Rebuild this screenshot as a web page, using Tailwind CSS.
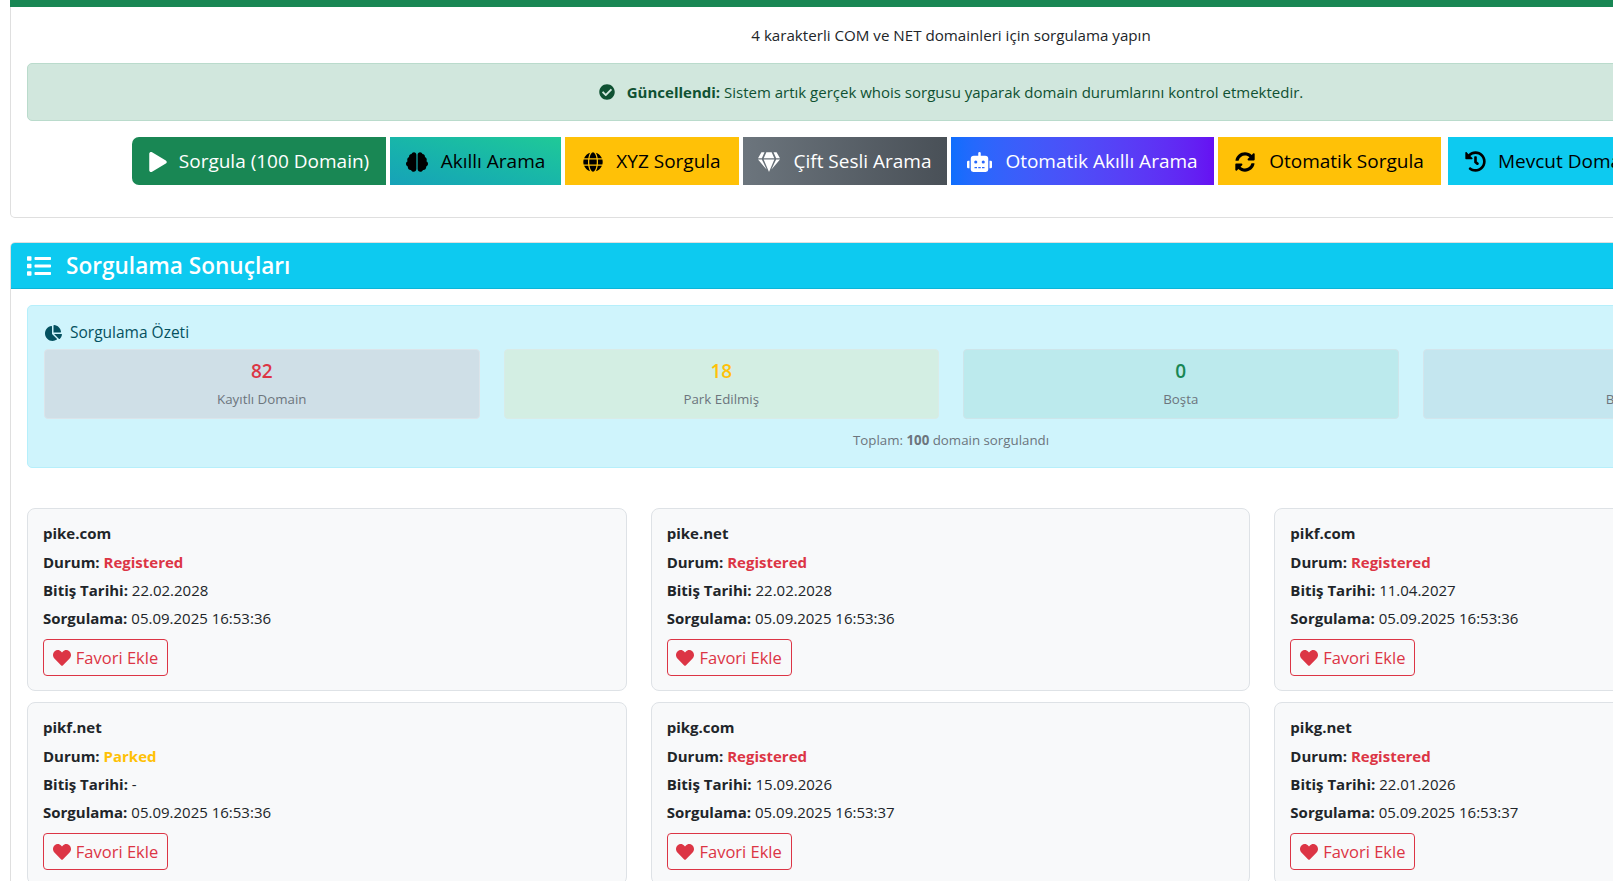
<!DOCTYPE html>
<html lang="tr">
<head>
    <meta charset="UTF-8">
    <title>Domain Sorgulama</title>
    <script src="https://cdn.jsdelivr.net/npm/@tailwindcss/browser@4"></script>
</head>
<body class="bg-white overflow-hidden h-[881px] font-['Open_Sans',sans-serif] text-[#212529]">
<div class="w-[1902px] px-[10px]">

    <!-- Search card -->
    <section class="h-[218px] border border-t-0 border-[#dfdfdf] rounded-b-[5px]">
        <div class="h-[7px] bg-[#198754] -mx-px"></div>
        <div class="px-4">
            <p class="h-[56px] flex items-center justify-center text-[15.15px]">4 karakterli COM ve NET domainleri için sorgulama yapın</p>
            <div class="h-[58px] flex items-center justify-center gap-2 rounded-[5px] border border-[#badbcc] bg-[#d1e7dd] text-[#0f5132] text-[15px]">
                <svg class="w-4 h-4 mr-1 fill-current" viewBox="0 0 512 512"><path d="M504 256c0 136.967-111.033 248-248 248S8 392.967 8 256 119.033 8 256 8s248 111.033 248 248zM227.314 387.314l184-184c6.248-6.248 6.248-16.379 0-22.627l-22.627-22.627c-6.248-6.249-16.379-6.249-22.628 0L216 308.118l-70.059-70.059c-6.248-6.248-16.379-6.248-22.628 0l-22.627 22.627c-6.248 6.248-6.248 16.379 0 22.627l104 104c6.249 6.249 16.379 6.249 22.628.001z"/></svg>
                <span><b class="font-bold">Güncellendi:</b> Sistem artık gerçek whois sorgusu yaparak domain durumlarını kontrol etmektedir.</span>
            </div>
            <!-- Buttons -->
            <div class="mt-4 flex justify-center gap-[4px] text-[19px]">
                <button class="h-12 pt-px w-[254px] flex items-center justify-center gap-3 rounded-l-[7px] bg-[#198754] text-white whitespace-nowrap">
                    <svg class="w-[18px] h-[20px] fill-current" viewBox="0 0 448 512"><path d="M424.4 214.7L72.4 6.6C43.8-10.3 0 6.1 0 47.9V464c0 37.5 40.7 60.1 72.4 41.3l352-208c31.4-18.5 31.5-64.1 0-82.6z"/></svg>
                    Sorgula (100 Domain)
                </button>
                <button class="h-12 pt-px w-[171px] flex items-center justify-center gap-[13px] bg-linear-to-tr from-[#17a2b8] to-[#20c997] text-black whitespace-nowrap">
                    <svg class="w-[22px] h-[20px] fill-current" viewBox="0 0 576 512"><path d="M208 0c-29.9 0-54.7 20.5-61.8 48.2-.8 0-1.4-.2-2.2-.2-35.3 0-64 28.7-64 64 0 4.8.6 9.5 1.7 14C52.5 138 32 166.6 32 200c0 12.6 3.2 24.3 8.3 34.9C16.3 248.7 0 274.3 0 304c0 33.3 20.4 61.9 49.4 73.9-.9 4.6-1.4 9.3-1.4 14.1 0 39.8 32.2 72 72 72 4.1 0 8.1-.5 12-1.2 9.6 28.5 36.2 49.2 68 49.2 39.8 0 72-32.2 72-72V64c0-35.3-28.7-64-64-64zm368 304c0-29.7-16.3-55.3-40.3-69.1 5.2-10.6 8.3-22.3 8.3-34.9 0-33.4-20.5-62-49.7-74 1-4.5 1.7-9.2 1.7-14 0-35.3-28.7-64-64-64-.8 0-1.5.2-2.2.2C422.7 20.5 397.9 0 368 0c-35.3 0-64 28.6-64 64v376c0 39.8 32.2 72 72 72 31.8 0 58.4-20.7 68-49.2 3.9.7 7.9 1.2 12 1.2 39.8 0 72-32.2 72-72 0-4.8-.5-9.5-1.4-14.1 29-12 49.4-40.6 49.4-73.9z"/></svg>
                    Akıllı Arama
                </button>
                <button class="h-12 pt-px w-[174px] flex items-center justify-center gap-[13px] bg-[#ffc107] text-black whitespace-nowrap">
                    <svg class="w-[20px] h-[20px] fill-current" viewBox="0 0 496 512"><path d="M336.5 160C322 70.7 287.8 8 248 8s-74 62.7-88.5 152h177zM152 256c0 22.2 1.2 43.5 3.3 64h185.3c2.1-20.5 3.3-41.8 3.3-64s-1.2-43.5-3.3-64H155.3c-2.1 20.5-3.3 41.8-3.3 64zm324.7-96c-28.6-67.9-86.5-120.4-158-141.6 24.4 33.8 41.2 84.7 50 141.6h108zM177.2 18.4C105.8 39.6 47.8 92.1 19.3 160h108c8.7-56.9 25.5-107.8 49.9-141.6zM487.4 192H372.7c2.1 21 3.3 42.5 3.3 64s-1.2 43-3.3 64h114.6c5.5-20.5 8.6-41.8 8.6-64s-3.1-43.5-8.5-64zM120 256c0-21.5 1.2-43 3.3-64H8.6C3.2 212.5 0 233.8 0 256s3.2 43.5 8.6 64h114.6c-2-21-3.2-42.5-3.2-64zm39.5 96c14.5 89.3 48.7 152 88.5 152s74-62.7 88.5-152h-177zm159.3 141.6c71.4-21.2 129.4-73.7 158-141.6h-108c-8.8 56.9-25.6 107.8-50 141.6zM19.3 352c28.6 67.9 86.5 120.4 158 141.6-24.4-33.8-41.2-84.7-50-141.6h-108z"/></svg>
                    XYZ Sorgula
                </button>
                <button class="h-12 pt-px w-[204px] flex items-center justify-center gap-[13px] bg-linear-to-r from-[#6c757d] to-[#495057] text-white whitespace-nowrap">
                    <svg class="w-[22px] h-[20px] fill-current" viewBox="0 0 576 512"><path d="M485.5 0L576 160H474.9L405.7 0h79.8zm-128 0l69.2 160H149.3L218.5 0h139zm-267 0h79.8l-69.2 160H0L90.5 0zM0 192h100.7l123 251.7c1.5 3.1-2.7 5.9-5 3.3L0 192zm148.2 0h279.6l-137 318.2c-1 2.4-4.5 2.4-5.5 0L148.2 192zm204.1 251.7l123-251.7H576L357.3 446.9c-2.3 2.7-6.5-.1-5-3.2z"/></svg>
                    Çift Sesli Arama
                </button>
                <button class="h-12 pt-px w-[263px] flex items-center justify-center gap-[13px] bg-linear-to-r from-[#0d6efd] to-[#6610f2] text-white whitespace-nowrap">
                    <svg class="w-[25px] h-[20px] fill-current" viewBox="0 0 640 512"><path d="M32,224H64V416H32A31.96166,31.96166,0,0,1,0,384V256A31.96166,31.96166,0,0,1,32,224Zm512-48V448a64.06328,64.06328,0,0,1-64,64H160a64.06328,64.06328,0,0,1-64-64V176a79.974,79.974,0,0,1,80-80H288V32a32,32,0,0,1,64,0V96H464A79.974,79.974,0,0,1,544,176ZM264,256a40,40,0,1,0-40,40A39.997,39.997,0,0,0,264,256Zm-8,128H192v32h64Zm96,0H288v32h64ZM456,256a40,40,0,1,0-40,40A39.997,39.997,0,0,0,456,256Zm-8,128H384v32h64ZM640,256V384a31.96166,31.96166,0,0,1-32,32H576V224h32A31.96166,31.96166,0,0,1,640,256Z"/></svg>
                    Otomatik Akıllı Arama
                </button>
                <button class="h-12 pt-px w-[223px] flex items-center justify-center gap-[14px] bg-[#ffc107] text-black whitespace-nowrap">
                    <svg class="w-[20px] h-[20px] fill-current" viewBox="0 0 512 512"><path d="M370.72 133.28C339.458 104.008 298.888 87.962 255.848 88c-77.458.068-144.328 53.178-162.791 126.85-1.344 5.363-6.122 9.15-11.651 9.15H24.103c-7.498 0-13.194-6.807-11.807-14.176C33.933 94.924 134.813 8 256 8c66.448 0 126.791 26.136 171.315 68.685L463.03 40.97C478.149 25.851 504 36.559 504 57.941V192c0 13.255-10.745 24-24 24H345.941c-21.382 0-32.09-25.851-16.971-40.971l41.75-41.749zM32 296h134.059c21.382 0 32.09 25.851 16.971 40.971l-41.75 41.75c31.262 29.273 71.835 45.319 114.876 45.28 77.418-.07 144.315-53.144 162.787-126.849 1.344-5.363 6.122-9.15 11.651-9.15h57.304c7.498 0 13.194 6.807 11.807 14.176C478.067 417.076 377.187 504 256 504c-66.448 0-126.791-26.136-171.315-68.685L48.97 471.03C33.851 486.149 8 475.441 8 454.059V320c0-13.255 10.745-24 24-24z"/></svg>
                    Otomatik Sorgula
                </button>
                <button class="h-12 pt-px w-[322px] ml-[3px] flex items-center justify-start pl-[17px] gap-3 bg-[#0dcaf0] text-black whitespace-nowrap">
                    <svg class="w-[21px] h-[21px] fill-current" viewBox="0 0 512 512"><path d="M504 255.531c.253 136.64-111.18 248.372-247.82 248.468-59.015.042-113.223-20.53-155.822-54.911-11.077-8.94-11.905-25.541-1.839-35.607l11.267-11.267c8.609-8.609 22.353-9.551 31.891-1.984C173.062 425.135 212.781 440 256 440c101.705 0 184-82.311 184-184 0-101.705-82.311-184-184-184-48.814 0-93.149 18.969-126.068 49.932l50.754 50.754c10.08 10.08 2.941 27.314-11.313 27.314H24c-8.837 0-16-7.163-16-16V38.627c0-14.254 17.234-21.393 27.314-11.314l49.372 49.372C129.209 34.136 189.552 8 256 8c136.81 0 247.747 110.78 248 247.531zm-180.912 78.784l9.823-12.63c8.138-10.463 6.253-25.542-4.21-33.679L288 256.349V152c0-13.255-10.745-24-24-24h-16c-13.255 0-24 10.745-24 24v135.651l65.409 50.874c10.463 8.137 25.541 6.253 33.679-4.21z"/></svg>
                    Mevcut Domainleri Sorgula
                </button>
            </div>
        </div>
    </section>

    <!-- Results card -->
    <section class="mt-[24px] border border-[#dfdfdf] rounded-t-[5px]">
        <div class="h-[46px] flex items-center gap-[15px] px-4 bg-[#0dcaf0] border-b border-[#0bb5d8] text-white rounded-t-[4px]">
            <svg class="w-6 h-6 fill-current" viewBox="0 0 512 512"><path d="M80 368H16a16 16 0 0 0-16 16v64a16 16 0 0 0 16 16h64a16 16 0 0 0 16-16v-64a16 16 0 0 0-16-16zm0-320H16A16 16 0 0 0 0 64v64a16 16 0 0 0 16 16h64a16 16 0 0 0 16-16V64a16 16 0 0 0-16-16zm0 160H16a16 16 0 0 0-16 16v64a16 16 0 0 0 16 16h64a16 16 0 0 0 16-16v-64a16 16 0 0 0-16-16zm416 176H176a16 16 0 0 0-16 16v32a16 16 0 0 0 16 16h320a16 16 0 0 0 16-16v-32a16 16 0 0 0-16-16zm0-320H176a16 16 0 0 0-16 16v32a16 16 0 0 0 16 16h320a16 16 0 0 0 16-16V80a16 16 0 0 0-16-16zm0 160H176a16 16 0 0 0-16 16v32a16 16 0 0 0 16 16h320a16 16 0 0 0 16-16v-32a16 16 0 0 0-16-16z"/></svg>
            <h2 class="pt-px text-[22.6px] font-semibold">Sorgulama Sonuçları</h2>
        </div>
        <div class="px-4 pt-4">
            <!-- Summary -->
            <div class="h-[163px] px-4 rounded-[5px] border border-[#b6effb] bg-[#cff4fc] text-[#055160]">
                <div class="h-[43px] pt-[10px] pl-px flex items-center gap-[8px] text-[15.5px] font-medium">
                    <svg class="w-[17px] h-4 fill-current" viewBox="0 0 544 512"><path d="M527.79 288H290.5l158.03 158.03c6.04 6.04 15.98 6.53 22.19.68 38.7-36.46 65.32-85.61 73.13-140.86 1.34-9.46-6.51-17.85-16.06-17.85zm-15.83-64.8C503.72 103.74 408.26 8.28 288.8.04 279.68-.59 272 7.1 272 16.24V240h223.77c9.14 0 16.82-7.68 16.19-16.8zM224 288V50.71c0-9.55-8.39-17.4-17.84-16.06C86.99 51.49-4.1 155.6.14 280.37 4.5 408.51 114.83 513.59 243.03 511.98c50.4-.63 96.97-16.87 135.26-44.03 7.9-5.6 8.42-17.23 1.57-24.08L224 288z"/></svg>
                    Sorgulama Özeti
                </div>
                <div class="grid grid-cols-4 gap-[24px] w-[1814px]">
                    <div class="h-[70px] flex flex-col items-center rounded-[4px] border border-[#dbe4ea] bg-[#cfdfe7]">
                        <span class="mt-[7px] text-[19px] font-semibold leading-[28px] text-[#dc3545]">82</span>
                        <span class="mt-[4px] text-[13.3px] leading-[20px] text-[#6c757d]">Kayıtlı Domain</span>
                    </div>
                    <div class="h-[70px] flex flex-col items-center rounded-[4px] border border-[#d9ebe7] bg-[#d3eee3]">
                        <span class="mt-[7px] text-[19px] font-semibold leading-[28px] text-[#ffc107]">18</span>
                        <span class="mt-[4px] text-[13.3px] leading-[20px] text-[#6c757d]">Park Edilmiş</span>
                    </div>
                    <div class="h-[70px] flex flex-col items-center rounded-[4px] border border-[#cde5ea] bg-[#bceaed]">
                        <span class="mt-[7px] text-[19px] font-semibold leading-[28px] text-[#198754]">0</span>
                        <span class="mt-[4px] text-[13.3px] leading-[20px] text-[#6c757d]">Boşta</span>
                    </div>
                    <div class="h-[70px] flex flex-col items-center rounded-[4px] border border-[#d3e5ec] bg-[#c4e6ef]">
                        <span class="mt-[7px] text-[19px] font-semibold leading-[28px] text-[#6c757d]">0</span>
                        <span class="mt-[4px] text-[13.3px] leading-[20px] text-[#6c757d]">Bilinmeyen</span>
                    </div>
                </div>
                <p class="mt-[11px] text-center text-[13.3px] leading-[20px] text-[#6c757d]">Toplam: <b class="font-bold">100</b> domain sorgulandı</p>
            </div>

            <!-- Result cards -->
            <div class="mt-[40px] w-[1847px] grid grid-cols-3 gap-x-[24px] gap-y-[11px] text-[15px] leading-[20px]">
                <div class="h-[183px] px-[15px] pt-[14px] rounded-[8px] border border-[#dee2e6] bg-[#f8f9fa]">
                    <p class="font-bold">pike.com</p>
                    <p class="mt-[9px]"><b class="font-bold">Durum:</b> <span class="font-bold text-[#dc3545]">Registered</span></p>
                    <p class="mt-2"><b class="font-bold">Bitiş Tarihi:</b> 22.02.2028</p>
                    <p class="mt-2"><b class="font-bold">Sorgulama:</b> 05.09.2025 16:53:36</p>
                    <button class="mt-[11px] h-[37px] w-[125px] flex items-center justify-center gap-[5px] rounded-[4px] border border-[#dc3545] text-[#dc3545] text-[16.5px]">
                        <svg class="w-[18px] h-[18px] fill-current" viewBox="0 0 512 512"><path d="M462.3 62.6C407.5 15.9 326 24.3 275.7 76.2L256 96.5l-19.7-20.3C186.1 24.3 104.5 15.9 49.7 62.6c-62.8 53.6-66.1 149.8-9.9 207.9l193.5 199.8c12.5 12.9 32.8 12.9 45.3 0l193.5-199.8c56.3-58.1 53-154.3-9.8-207.9z"/></svg>
                        Favori Ekle
                    </button>
                </div>
                <div class="h-[183px] px-[15px] pt-[14px] rounded-[8px] border border-[#dee2e6] bg-[#f8f9fa]">
                    <p class="font-bold">pike.net</p>
                    <p class="mt-[9px]"><b class="font-bold">Durum:</b> <span class="font-bold text-[#dc3545]">Registered</span></p>
                    <p class="mt-2"><b class="font-bold">Bitiş Tarihi:</b> 22.02.2028</p>
                    <p class="mt-2"><b class="font-bold">Sorgulama:</b> 05.09.2025 16:53:36</p>
                    <button class="mt-[11px] h-[37px] w-[125px] flex items-center justify-center gap-[5px] rounded-[4px] border border-[#dc3545] text-[#dc3545] text-[16.5px]">
                        <svg class="w-[18px] h-[18px] fill-current" viewBox="0 0 512 512"><path d="M462.3 62.6C407.5 15.9 326 24.3 275.7 76.2L256 96.5l-19.7-20.3C186.1 24.3 104.5 15.9 49.7 62.6c-62.8 53.6-66.1 149.8-9.9 207.9l193.5 199.8c12.5 12.9 32.8 12.9 45.3 0l193.5-199.8c56.3-58.1 53-154.3-9.8-207.9z"/></svg>
                        Favori Ekle
                    </button>
                </div>
                <div class="h-[183px] px-[15px] pt-[14px] rounded-[8px] border border-[#dee2e6] bg-[#f8f9fa]">
                    <p class="font-bold">pikf.com</p>
                    <p class="mt-[9px]"><b class="font-bold">Durum:</b> <span class="font-bold text-[#dc3545]">Registered</span></p>
                    <p class="mt-2"><b class="font-bold">Bitiş Tarihi:</b> 11.04.2027</p>
                    <p class="mt-2"><b class="font-bold">Sorgulama:</b> 05.09.2025 16:53:36</p>
                    <button class="mt-[11px] h-[37px] w-[125px] flex items-center justify-center gap-[5px] rounded-[4px] border border-[#dc3545] text-[#dc3545] text-[16.5px]">
                        <svg class="w-[18px] h-[18px] fill-current" viewBox="0 0 512 512"><path d="M462.3 62.6C407.5 15.9 326 24.3 275.7 76.2L256 96.5l-19.7-20.3C186.1 24.3 104.5 15.9 49.7 62.6c-62.8 53.6-66.1 149.8-9.9 207.9l193.5 199.8c12.5 12.9 32.8 12.9 45.3 0l193.5-199.8c56.3-58.1 53-154.3-9.8-207.9z"/></svg>
                        Favori Ekle
                    </button>
                </div>
                <div class="h-[183px] px-[15px] pt-[14px] rounded-[8px] border border-[#dee2e6] bg-[#f8f9fa]">
                    <p class="font-bold">pikf.net</p>
                    <p class="mt-[9px]"><b class="font-bold">Durum:</b> <span class="font-bold text-[#ffc107]">Parked</span></p>
                    <p class="mt-2"><b class="font-bold">Bitiş Tarihi:</b> -</p>
                    <p class="mt-2"><b class="font-bold">Sorgulama:</b> 05.09.2025 16:53:36</p>
                    <button class="mt-[11px] h-[37px] w-[125px] flex items-center justify-center gap-[5px] rounded-[4px] border border-[#dc3545] text-[#dc3545] text-[16.5px]">
                        <svg class="w-[18px] h-[18px] fill-current" viewBox="0 0 512 512"><path d="M462.3 62.6C407.5 15.9 326 24.3 275.7 76.2L256 96.5l-19.7-20.3C186.1 24.3 104.5 15.9 49.7 62.6c-62.8 53.6-66.1 149.8-9.9 207.9l193.5 199.8c12.5 12.9 32.8 12.9 45.3 0l193.5-199.8c56.3-58.1 53-154.3-9.8-207.9z"/></svg>
                        Favori Ekle
                    </button>
                </div>
                <div class="h-[183px] px-[15px] pt-[14px] rounded-[8px] border border-[#dee2e6] bg-[#f8f9fa]">
                    <p class="font-bold">pikg.com</p>
                    <p class="mt-[9px]"><b class="font-bold">Durum:</b> <span class="font-bold text-[#dc3545]">Registered</span></p>
                    <p class="mt-2"><b class="font-bold">Bitiş Tarihi:</b> 15.09.2026</p>
                    <p class="mt-2"><b class="font-bold">Sorgulama:</b> 05.09.2025 16:53:37</p>
                    <button class="mt-[11px] h-[37px] w-[125px] flex items-center justify-center gap-[5px] rounded-[4px] border border-[#dc3545] text-[#dc3545] text-[16.5px]">
                        <svg class="w-[18px] h-[18px] fill-current" viewBox="0 0 512 512"><path d="M462.3 62.6C407.5 15.9 326 24.3 275.7 76.2L256 96.5l-19.7-20.3C186.1 24.3 104.5 15.9 49.7 62.6c-62.8 53.6-66.1 149.8-9.9 207.9l193.5 199.8c12.5 12.9 32.8 12.9 45.3 0l193.5-199.8c56.3-58.1 53-154.3-9.8-207.9z"/></svg>
                        Favori Ekle
                    </button>
                </div>
                <div class="h-[183px] px-[15px] pt-[14px] rounded-[8px] border border-[#dee2e6] bg-[#f8f9fa]">
                    <p class="font-bold">pikg.net</p>
                    <p class="mt-[9px]"><b class="font-bold">Durum:</b> <span class="font-bold text-[#dc3545]">Registered</span></p>
                    <p class="mt-2"><b class="font-bold">Bitiş Tarihi:</b> 22.01.2026</p>
                    <p class="mt-2"><b class="font-bold">Sorgulama:</b> 05.09.2025 16:53:37</p>
                    <button class="mt-[11px] h-[37px] w-[125px] flex items-center justify-center gap-[5px] rounded-[4px] border border-[#dc3545] text-[#dc3545] text-[16.5px]">
                        <svg class="w-[18px] h-[18px] fill-current" viewBox="0 0 512 512"><path d="M462.3 62.6C407.5 15.9 326 24.3 275.7 76.2L256 96.5l-19.7-20.3C186.1 24.3 104.5 15.9 49.7 62.6c-62.8 53.6-66.1 149.8-9.9 207.9l193.5 199.8c12.5 12.9 32.8 12.9 45.3 0l193.5-199.8c56.3-58.1 53-154.3-9.8-207.9z"/></svg>
                        Favori Ekle
                    </button>
                </div>
            </div>
        </div>
    </section>
</div>
</body>
</html>
